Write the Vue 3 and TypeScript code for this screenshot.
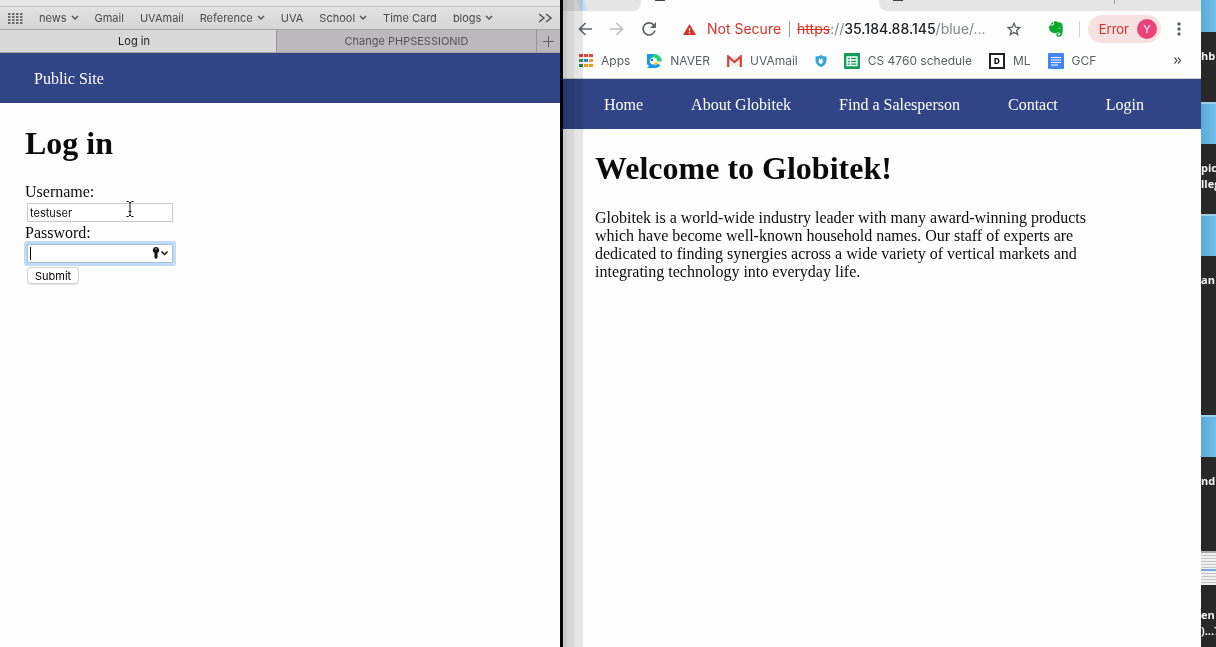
<script setup lang="ts">
import { ref } from 'vue'

interface Favorite { label: string; menu?: boolean }

const favorites: Favorite[] = [
  { label: 'news', menu: true },
  { label: 'Gmail' },
  { label: 'UVAmail' },
  { label: 'Reference', menu: true },
  { label: 'UVA' },
  { label: 'School', menu: true },
  { label: 'Time Card' },
  { label: 'blogs', menu: true },
]
const navLinks: string[] = ['Home', 'About Globitek', 'Find a Salesperson', 'Contact', 'Login']
const appColors: string[] = ['#ea4335', '#ea4335', '#ea4335', '#34a853', '#2f80ed', '#f29d0b', '#1e8e4e', '#f29d0b', '#f29d0b']
const username = ref('testuser')
const password = ref('')
</script>

<template>
  <div class="desktop">
    <section class="left">
      <div class="strip"></div>
      <nav class="favorites">
        <button class="plain grid-btn" aria-label="Show favorites">
          <svg width="15" height="11" viewBox="0 0 15 11" fill="#666">
            <template v-for="r in 4" :key="r">
              <rect v-for="c in 4" :key="c" :x="(c - 1) * 4" :y="(r - 1) * 3" width="2.500" height="2" rx="0.5" />
            </template>
          </svg>
        </button>
        <a v-for="f in favorites" :key="f.label" href="#">{{ f.label }}<svg v-if="f.menu" class="chev" width="8" height="6" viewBox="0 0 8 6"><path d="M1 1l3 3 3-3" fill="none" stroke="#555" stroke-width="1.5" /></svg></a>
        <button class="plain more" aria-label="More favorites">
          <svg width="14" height="10" viewBox="0 0 14 10"><path d="M1 1l5 4-5 4M8 1l5 4-5 4" fill="none" stroke="#555" stroke-width="1.5" /></svg>
        </button>
      </nav>
      <div class="tabs">
        <button class="tab active">Log in</button>
        <button class="tab">Change PHPSESSIONID</button>
        <button class="tab add" aria-label="New tab">
          <svg width="11" height="11" viewBox="0 0 11 11"><path d="M5.5 0v11M0 5.5h11" stroke="#606060" /></svg>
        </button>
      </div>
      <nav class="site-nav"><a href="#">Public Site</a></nav>
      <main class="login">
        <h1>Log in</h1>
        <form @submit.prevent>
          <label for="username">Username:</label>
          <div class="field">
            <input id="username" v-model="username" type="text">
            <svg class="ibeam" width="8" height="16" viewBox="0 0 8 16"><path d="M.5 .5h2L4 2l1.500-1.500h2M4 2v12M.5 15.500h2L4 14l1.500 1.500h2M2.500 10.500h3" fill="none" stroke="#111" /></svg>
          </div>
          <label for="password">Password:</label>
          <div class="field">
            <input id="password" v-model="password" class="focused" type="password">
            <span class="caret"></span>
            <svg class="key" width="17" height="12" viewBox="0 0 17 12">
              <path d="M4 0a3.200 3.200 0 0 1 1.500 6v4.500L4 12l-1.500-1.500V6A3.200 3.200 0 0 1 4 0z" fill="#111" />
              <circle cx="4" cy="2" r="0.700" fill="#fff" />
              <path d="M9.500 4.500l3 3 3-3" fill="none" stroke="#111" stroke-width="1.500" />
            </svg>
          </div>
          <button class="submit" type="submit">Submit</button>
        </form>
      </main>
    </section>

    <div class="divider"></div>

    <section class="right">
      <div class="chrome-tabs">
        <div class="ctab first"></div>
        <div class="ctab current"><i></i></div>
        <div class="ctab last"><i></i><b></b></div>
      </div>
      <div class="toolbar">
        <button class="plain" aria-label="Back"><svg width="14" height="14" viewBox="0 0 14 14"><path d="M14 7H1.500M7.500 1l-6 6 6 6" fill="none" stroke="#5f6368" stroke-width="1.600" /></svg></button>
        <button class="plain forward" aria-label="Forward"><svg width="14" height="14" viewBox="0 0 14 14"><path d="M0 7h12.500M6.500 1l6 6-6 6" fill="none" stroke="#bdbfc1" stroke-width="1.600" /></svg></button>
        <button class="plain reload" aria-label="Reload"><svg width="14" height="14" viewBox="0 0 14 14"><path d="M12 3.500A6 6 0 1 0 12.900 8.500" fill="none" stroke="#5f6368" stroke-width="1.700" /><path d="M14 0v6H8z" fill="#5f6368" /></svg></button>
        <button class="plain secure">
          <svg width="13" height="11" viewBox="0 0 13 11"><path d="M6.500 0L13 11H0z" fill="#d93025" /><path d="M6.500 4v3.200M6.500 8v1.500" stroke="#fff" stroke-width="1.300" /></svg>
          <span>Not Secure</span>
        </button>
        <div class="url"><s>https</s><span>://</span><strong>35.184.88.145</strong><span>/blue/...</span></div>
        <button class="plain star" aria-label="Bookmark"><svg width="14" height="14" viewBox="0 0 14 14"><path d="M7 1.300l1.700 3.900 4.200.4-3.200 2.800 1 4.200L7 10.400l-3.700 2.200 1-4.200L1.100 5.600l4.200-.4z" fill="none" stroke="#5f6368" stroke-width="1.400" /></svg></button>
        <button class="plain" aria-label="Evernote"><svg width="14" height="16" viewBox="0 0 14 16"><path d="M4.300 .6v2.200q0 .8-.8.8H1L4.300.6zM5 .3q3-.6 4 1 3.300 0 4 1.200 1.300 4 .6 8.500-.5 4.600-3 4.700-3.300.2-3.300-2.300 0-2.200 2.600-2.200v1.300q-1.300 0-1.200 1 .1.900 1.300.9 1.300-.1 1.300-1.900-.6-1.200-2.900-1.400-.9 1.500-2.600 1.200Q1.200 11.700.4 8.500-.1 6 .3 4.500h3.200Q5 4.500 5 3z" fill="#0ba82f" /><path d="M9.500 6.800q1.500-.6 2 1-1-.5-2-.2z" fill="#fff" /></svg></button>
        <span class="sep"></span>
        <button class="profile">Error <span>Y</span></button>
        <button class="plain dots" aria-label="Menu"><svg width="4" height="14" viewBox="0 0 4 14" fill="#5f6368"><circle cx="2" cy="2" r="1.700" /><circle cx="2" cy="7" r="1.700" /><circle cx="2" cy="12" r="1.700" /></svg></button>
      </div>
      <nav class="bookmarks">
        <a href="#"><svg width="14" height="13" viewBox="0 0 14 13"><rect v-for="(c, i) in appColors" :key="i" :x="(i % 3) * 5" :y="Math.floor(i / 3) * 5" width="4" height="3" :fill="c" /></svg>Apps</a>
        <a href="#"><svg width="15" height="14" viewBox="0 0 15 14"><path d="M0 0h8v14H0l2-2L0 10z" fill="#109cf5" /><path d="M6 14h2q4 0 5.500-3L9 9z" fill="#109cf5" /><path d="M7 0q7 0 8 7.500H9L5 3z" fill="#20d66b" /><circle cx="6.500" cy="7" r="3.500" fill="#fff" /><circle cx="5" cy="6" r="1.100" fill="#234" /><path d="M7 8l5 1-4 3z" fill="#f7c51d" /></svg>NAVER</a>
        <a href="#"><svg width="15" height="12" viewBox="0 0 15 12"><path d="M1 1h13v10H1z" fill="#eee" /><path d="M1.200 12V1.500L7.500 7l6.300-5.500V12" fill="none" stroke="#dc4235" stroke-width="2.200" /></svg>UVAmail</a>
        <a href="#" aria-label="Shield"><svg width="12" height="12" viewBox="0 0 12 12"><path d="M6 0q2.500 1.500 5.500 1.500V6Q11 10 6 12 1 10 .5 6V1.500Q3.500 1.500 6 0z" fill="#33a5d3" /><path d="M4 4v2l-.8-.6.8 2.600 2 1 1.800-1.500.4-3-.8 1.500V3l-.9 2V2.500L5.500 5 5 3z" fill="#fff" /></svg></a>
        <a href="#"><svg width="16" height="16" viewBox="0 0 16 16"><rect width="16" height="16" rx="1" fill="#0f9d58" /><path d="M3 4h10v8.500H3zM3 7h10M3 9.800h10M6.500 4v8.500" fill="none" stroke="#fff" stroke-width="1.300" /></svg>CS 4760 schedule</a>
        <a href="#"><span class="dbox">D</span>ML</a>
        <a href="#"><svg width="16" height="16" viewBox="0 0 16 16"><rect width="16" height="16" rx="1" fill="#4285f4" /><path d="M3 4.500h10M3 7h10M3 9.500h10M3 12h7" stroke="#fff" /></svg>GCF</a>
        <button class="plain more" aria-label="More bookmarks"><svg width="7" height="7" viewBox="0 0 7 7"><path d="M.5 .5l2.500 3-2.500 3M4 .5l2.500 3L4 6.500" fill="none" stroke="#555" stroke-width="1.200" /></svg></button>
      </nav>
      <nav class="site-nav globitek"><a v-for="l in navLinks" :key="l" href="#">{{ l }}</a></nav>
      <main class="welcome">
        <h1>Welcome to Globitek!</h1>
        <p>Globitek is a world-wide industry leader with many award-winning products which have become well-known household names. Our staff of experts are dedicated to finding synergies across a wide variety of vertical markets and integrating technology into everyday life.</p>
      </main>
      <div class="shade"></div>
    </section>

    <aside class="icons">
      <div class="file f1"><i></i><span>hb</span></div>
      <div class="file f2"><i></i><span>pic</span><span>lleg</span></div>
      <div class="file f3"><i></i><span>an</span></div>
      <div class="file f4"><i></i><span>nd</span></div>
      <div class="file f5"><i class="doc"></i><span>en</span><span>)...7</span></div>
    </aside>
  </div>
</template>

<style>
body { margin: 0; }
</style>

<style scoped>
* { box-sizing: border-box; }
.desktop {
  display: grid;
  grid-template-columns: minmax(0, 560fr) 3px minmax(0, 638fr) 15px;
  height: 100vh;
  overflow: hidden;
  background: #fefefe;
  color: #0b0b0b;
  font-family: "Liberation Serif", "Times New Roman", serif;
  font-size: 16px;
  line-height: 18px;
}
a { color: inherit; text-decoration: none; white-space: nowrap; }
svg { display: block; flex: none; }
.plain { border: 0; padding: 0; margin: 0; background: none; font: inherit; color: inherit; }
.strip { height: 7px; background: #e6e6e6; border-bottom: 1px solid #c4c4c4; }
.favorites {
  display: flex; align-items: center; gap: 16px;
  height: 23px; padding: 0 8px;
  background: linear-gradient(#e2e2e2, #d6d6d6);
  border-bottom: 1px solid #a6a6a6;
  font: 11px/14px Inter, sans-serif; color: #4b4b4b;
}
.favorites a { display: flex; align-items: center; }
.chev { margin-left: 4px; }
.more { margin-left: auto; }
.tabs { display: grid; grid-template-columns: 276fr 260fr 24px; height: 23px; border-bottom: 1px solid #a6a6a6; }
.tab {
  display: flex; align-items: center; justify-content: center;
  border: 0; border-left: 1px solid #99929a; padding: 0;
  background: #bcb9bc; color: #555; font: 11px/14px Inter, sans-serif;
}
.tab.active { background: #d9d9d9; color: #222; border-left: 0; padding-right: 8px; }
.site-nav { display: flex; align-items: center; height: 50px; padding: 2px 34px 0; background: #304486; color: #fff; }
.globitek { gap: 48px; padding: 2px 41px 0; }
h1 { margin: 0; font-size: 32px; line-height: 36px; font-weight: 700; }
.login { padding: 22px 25px; }
.login form { display: flex; flex-direction: column; align-items: flex-start; padding-top: 22px; }
.field { position: relative; padding: 2px; width: 150px; }
.field input {
  display: block; width: 100%; height: 19px; padding: 1px 2px 0; outline: 0;
  border: 1px solid #c8c8c8; border-radius: 0; background: #fff;
  font: 11px/14px Inter, sans-serif; color: #111;
}
.field .focused { border-color: #a9bfd6; box-shadow: 0 0 0 3px #bedcf8; border-radius: 1px; }
.ibeam { position: absolute; left: 101px; top: 0; }
.caret { position: absolute; left: 5px; top: 5px; width: 1px; height: 13px; background: #000; }
.key { position: absolute; left: 127px; top: 5px; }
.submit {
  margin: 2px; height: 17px; padding: 0 7px; border: 1px solid #d2d2d2; border-radius: 4px;
  background: #fff; font: 11px/14px Inter, sans-serif; color: #000; box-shadow: 0 1px 0 #e4e4e4;
}
.divider { background: #050505; }
.right { position: relative; overflow: hidden; }
.chrome-tabs { display: grid; grid-template-columns: 78fr 238fr 322fr; height: 11px; }
.ctab { position: relative; background: #e5e5e5; }
.ctab.first { border-bottom-right-radius: 8px; background: linear-gradient(75deg, #e5e5e5 16px, #c3dff5 17px, #c3dff5 23px, #e5e5e5 24px); }
.ctab.current { background: none; }
.ctab.last { border-bottom-left-radius: 8px; }
.ctab i { position: absolute; left: 14px; top: 0; width: 10px; height: 1px; background: #444; }
.ctab b { position: absolute; right: 86px; top: 0; width: 1px; height: 4px; background: #999; }
.toolbar { display: flex; align-items: center; height: 36px; padding: 0 20px 0 15px; font: 14px/18px Inter, sans-serif; }
.forward { margin-left: 18px; }
.reload { margin-left: 18px; }
.secure { display: flex; align-items: center; gap: 11px; margin-left: 27px; padding-right: 8px; border-right: 1px solid #999; color: #d93025; line-height: 16px; white-space: nowrap; }
.url { flex: 1; min-width: 0; padding-left: 7px; white-space: nowrap; color: #80868b; }
.url s { color: #d93025; }
.url strong { font-weight: 500; color: #202124; }
.star { margin-right: 28px; }
.sep { width: 1px; height: 16px; margin: 0 8px 0 16px; background: #cfcfcf; }
.profile {
  display: flex; align-items: center; gap: 8px; height: 28px; padding: 0 4px 0 11px; border: 0; border-radius: 14px;
  background: #f8e2e1; color: #d93025; font: 13px/18px Inter, sans-serif;
}
.profile span { width: 20px; height: 20px; border-radius: 50%; background: #ec407a; color: #fff; font-size: 11px; line-height: 20px; text-align: center; }
.dots { margin-left: 16px; }
.bookmarks { display: flex; align-items: center; gap: 17px; height: 32px; padding: 0 20px 4px 16px; border-bottom: 1px solid #cfcfcf; font: 12px/16px Inter, sans-serif; color: #5a5e63; }
.bookmarks a { display: flex; align-items: center; gap: 8px; }
.dbox { width: 16px; height: 16px; border: 2px solid #222; background: #fff; color: #000; font: 800 8px/12px Inter, sans-serif; text-align: center; }
.welcome { padding: 21px 32px; }
.welcome p { max-width: 500px; margin: 23px 0 0; }
.shade {
  position: absolute; inset: 0 auto 0 0; width: 20px; mix-blend-mode: multiply; pointer-events: none;
  background: linear-gradient(90deg, #cbcbcb 4px, #d8d8d8 4px, #d8d8d8 11px, #e6e6e6 11px);
}
.icons { overflow: hidden; background: #282828; color: #f2f2f2; font: 700 11px/16px "Open Sans", sans-serif; }
.file { height: 112px; overflow: hidden; }
.file i { display: block; height: 42px; margin-bottom: 16px; border-top: 2px solid #a0cfea; background: linear-gradient(90deg, #5ba9d6, #71c0ea); }
.file span { display: block; white-space: nowrap; }
.f1 { height: 102px; }
.f1 i { height: 32px; border-top: 0; }
.f3 { height: 201px; }
.f4 { height: 136px; }
.file .doc { height: 34px; margin-bottom: 22px; border-color: #aaa; background: linear-gradient(transparent 16px, #73a8d8 16px, #73a8d8 18px, transparent 18px), repeating-linear-gradient(#eee 0 2px, #c8c8c8 2px 3px); }
</style>
